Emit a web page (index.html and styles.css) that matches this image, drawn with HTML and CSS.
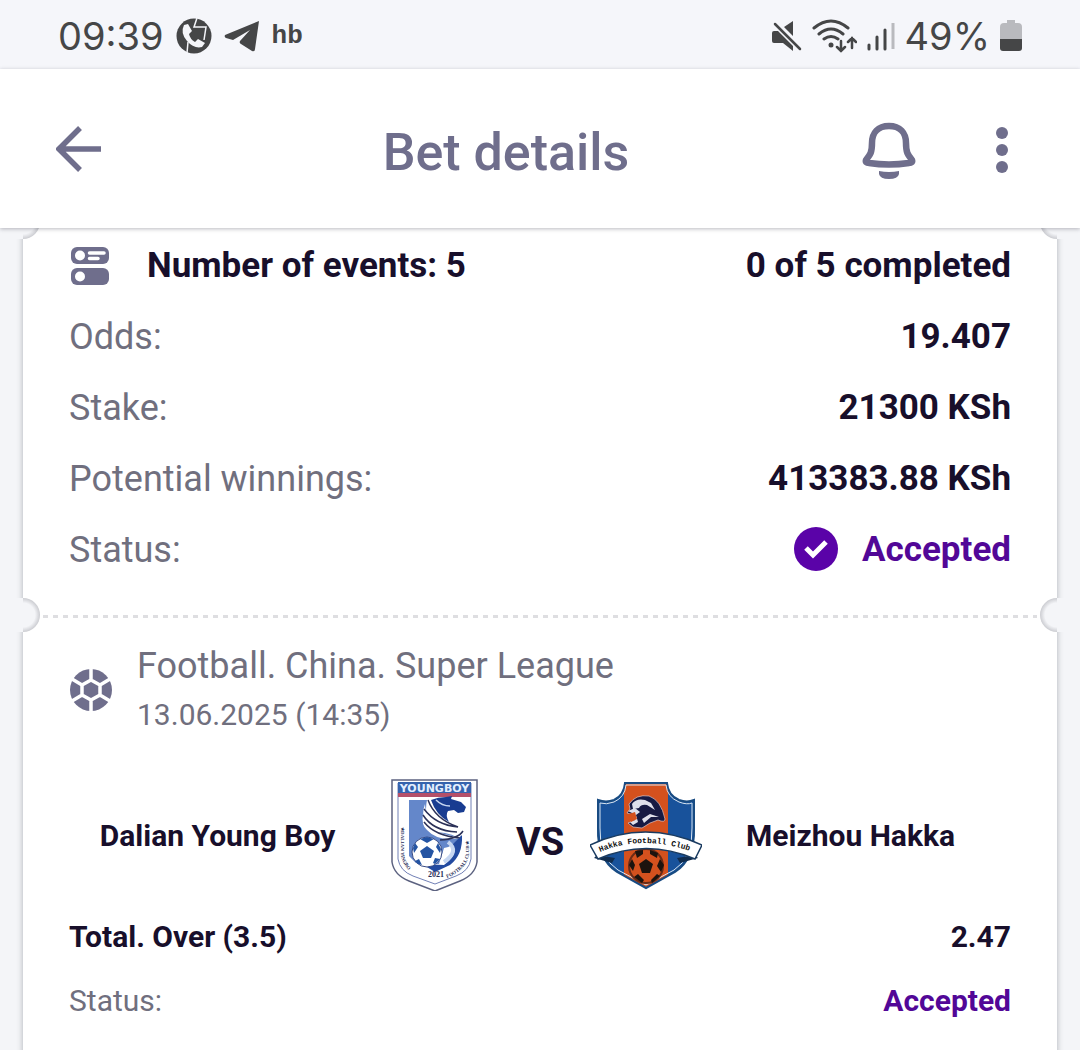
FILE: index.html
```html
<!DOCTYPE html>
<html lang="en">
<head>
<meta charset="utf-8">
<meta name="viewport" content="width=device-width, initial-scale=1">
<title>Bet details</title>
<link rel="stylesheet" href="styles.css">
</head>
<body>
<div class="status-bar">
  <div class="status-group">
    <span class="clock">09:39</span>
    <svg class="call-icon" width="36" height="36" viewBox="0 0 36 36" aria-hidden="true">
      <circle cx="18" cy="18" r="17.5" fill="#454647"/>
      <path d="M8 7Q4 15 11 23Q18 31 26 29L29 25 22 21 19 24Q14 21 13 16L16 13 12 6Z" fill="#f5f6fa"/>
      <path d="M21 0L18 9H30L28 22M12 24L11 35" fill="none" stroke="#f5f6fa" stroke-width="1.500"/>
    </svg>
    <svg class="plane-icon" width="36" height="32" viewBox="0 0 36 32" aria-hidden="true">
      <path d="M35 1L1 15Q0 17 2 18L9 20 26 10 16 21Q15 23 17 24L28 31Q31 32 31 29Z" fill="#454647"/>
    </svg>
    <span class="carrier">hb</span>
  </div>
  <div class="status-group status-group-end">
    <svg class="mute-icon" width="30" height="32" viewBox="0 0 30 32" aria-hidden="true">
      <path d="M2 11H6L21 26V31L11 23H2Q0 23 0 21V13Q0 11 2 11ZM12 7L21 1V16Z" fill="#454647"/>
      <path d="M3 4l25 25" stroke="#454647" stroke-width="2.5" stroke-linecap="round"/>
    </svg>
    <svg class="wifi-icon" width="45" height="34" viewBox="0 0 45 34" aria-hidden="true">
      <g fill="none" stroke="#454647" stroke-width="3" stroke-linecap="round">
        <path d="M2 9q17-14 34 0M7 15q12-10 24 0M12 20q7-5 14 0"/>
        <path d="M29 22v10m-4-4l4 4 4-4M40 29V19m-4 4l4-4 4 4" stroke-width="2.5"/>
      </g>
      <circle cx="19" cy="26" r="2.5" fill="#454647"/>
    </svg>
    <svg class="signal-icon" width="28" height="30" viewBox="0 0 28 30" aria-hidden="true">
      <path d="M2 24v4M10 16v12M18 9v19" stroke="#454647" stroke-width="3" stroke-linecap="round"/>
      <path d="M26 2v26" stroke="#b9babe" stroke-width="3"/>
    </svg>
    <span class="clock">49%</span>
    <svg class="battery-icon" width="22" height="32" viewBox="0 0 22 32" aria-hidden="true">
      <path d="M7 0h8v3h3q4 0 4 4v12H0V7q0-4 4-4h3z" fill="#b9babe"/>
      <path d="M0 19h22v9q0 3-3 3H3q-3 0-3-3z" fill="#454647"/>
    </svg>
  </div>
</div>

<header class="app-bar">
  <button class="icon-button" type="button" aria-label="Back">
    <svg width="46" height="46" viewBox="0 0 46 46"><path d="M45 23H4M24 2L3 23l21 21" fill="none" stroke="#6f6e8c" stroke-width="5.5"/></svg>
  </button>
  <h1 class="title">Bet details</h1>
  <div class="actions">
    <button class="icon-button" type="button" aria-label="Notifications">
      <svg width="54" height="58" viewBox="0 0 54 58">
        <path d="M27 5C16 5 10 12 10 22C10 32 8 34 4 39Q3 42 7 42Q27 45 47 42Q51 42 50 39C46 34 44 32 44 22C44 12 38 5 27 5Z" fill="none" stroke="#6f6e8c" stroke-width="6.5" stroke-linejoin="round"/>
        <path d="M17 50q10 2 20 0v3q-1 5-10 5t-10-5z" fill="#6f6e8c"/>
      </svg>
    </button>
    <button class="icon-button" type="button" aria-label="More options">
      <svg width="12" height="46" viewBox="0 0 12 46" fill="#6f6e8c"><circle cx="6" cy="6" r="6"/><circle cx="6" cy="23" r="6"/><circle cx="6" cy="40" r="6"/></svg>
    </button>
  </div>
</header>

<main class="page">
  <article class="ticket">
    <section class="summary">
      <div class="row row-strong">
        <span class="row-label">
          <svg class="events-icon" width="40" height="38" viewBox="0 0 40 38" aria-hidden="true">
            <rect x="1" width="38" height="17" rx="6" fill="#6f6e8c"/>
            <rect x="1" y="21" width="38" height="17" rx="6" fill="#6f6e8c"/>
            <circle cx="10" cy="8.500" r="5" fill="#fff"/><circle cx="10" cy="29.500" r="5" fill="#fff"/>
            <path d="M19.500 6H34M19.500 11.500H28" stroke="#fff" stroke-width="3.500" stroke-linecap="round"/>
          </svg>
          Number of events: 5
        </span>
        <span class="row-value">0 of 5 completed</span>
      </div>
      <div class="row"><span class="caption">Odds:</span><span class="row-value">19.407</span></div>
      <div class="row"><span class="caption">Stake:</span><span class="row-value">21300 KSh</span></div>
      <div class="row"><span class="caption">Potential winnings:</span><span class="row-value">413383.88 KSh</span></div>
      <div class="row">
        <span class="caption">Status:</span>
        <span class="row-value accepted">
          <svg width="46" height="46" viewBox="0 0 46 46" aria-hidden="true"><circle cx="23" cy="22" r="22" fill="#5a03a8"/><path d="M13 21l7 7 13-13" fill="none" stroke="#fff" stroke-width="5"/></svg>
          Accepted
        </span>
      </div>
    </section>

    <section class="event">
      <div class="event-head">
        <svg width="44" height="44" viewBox="0 0 44 44" aria-hidden="true">
          <circle cx="22" cy="22" r="21" fill="#6f6e8c"/>
          <path d="M22 12l9 5v10l-9 5-9-5V17zM22 12V0M31 17l10-6M31 27l10 6M22 32v12M13 27L3 33M13 17L3 11" fill="none" stroke="#fff" stroke-width="3.500"/>
        </svg>
        <div>
          <h2 class="league">Football. China. Super League</h2>
          <time class="date" datetime="2025-06-13T14:35">13.06.2025 (14:35)</time>
        </div>
      </div>

      <div class="fixture">
        <span class="team">Dalian Young Boy</span>
        <svg class="crest" width="112" height="112" viewBox="0 0 112 112" role="img" aria-label="Dalian Young Boy crest">
          <defs>
            <path id="ring-left" d="M23 48V77Q27 94 47 101"/>
            <path id="ring-right" d="M69 99Q88 91 91 76V44"/>
          </defs>
          <path d="M14 1H99V83Q97 96 82 102L57 112 31 102Q16 96 14 83Z" fill="#fff" stroke="#5c6280" stroke-width="1.500"/>
          <path d="M20 4H93V80Q91 92 78 97L57 105 35 97Q22 92 20 80Z" fill="#fff" stroke="#7180b6" stroke-width="1"/>
          <path d="M20 3H93V14H20Z" fill="#3563ad"/>
          <path d="M20 14H93V18H20Z" fill="#b55069"/>
          <text x="56.500" y="13" class="crest-name">YOUNGBOY</text>
          <path d="M31 21H49Q45 39 58 49L83 57Q77 67 66 69L61 85 38 84 31 77Z" fill="#6487ca"/>
          <path d="M47 25Q47 43 68 49Q81 51 84 62Q76 54 59 53Q40 45 47 25Z" fill="#fff"/>
          <path d="M50 28Q56 41 80 48Q86 51 87 59Q81 53 65 52Q46 47 50 28ZM45 35Q49 50 66 55L82 59Q60 63 49 51Q43 46 45 35Z" fill="#fff"/>
          <path d="M50 21Q57 40 80 48Q58 46 46 30M45 36Q55 52 79 53M46 43Q57 57 82 59M62 61Q80 60 85 52" fill="none" stroke="#2b3158" stroke-width="1.500"/>
          <path d="M53 21Q60 18 68 18L74 17 73 20 83 23 88 28 86 33 80 34 76 31 70 32Q67 36 71 43Q58 36 53 21Z" fill="#183c91"/>
          <path d="M58 21Q64 27 72 27" fill="none" stroke="#c6d6f1" stroke-width="1.500"/>
          <path d="M84 56Q85 76 72 86L57 93 44 85 66 86Q81 75 73 67Z" fill="#234aa0"/>
          <path d="M70 63Q82 72 66 83" fill="none" stroke="#c6d6f1" stroke-width="4"/>
          <circle cx="49" cy="73" r="15" fill="#fff" stroke="#384a83"/>
          <path d="M49 67l7 5-3 7h-8l-3-7z" fill="#2454a3"/>
          <path d="M42 60l7-2 7 2-7 4zM35 69l2-5 3 4-4 6zM37 82l4-2 3 6-4-1zM55 84l2-5 5 1-5 5zM60 64l3 6-1 4-4-6z" fill="#2454a3"/>
          <g class="crest-ring">
            <text><textPath href="#ring-left">★DALIAN YINGBO</textPath></text>
            <text><textPath href="#ring-right">FOOTBALL CLUB★</textPath></text>
            <text x="58" y="98" class="crest-year">2021</text>
          </g>
        </svg>
        <span class="versus">VS</span>
        <svg class="crest" width="112" height="112" viewBox="0 0 112 112" role="img" aria-label="Meizhou Hakka crest">
          <defs>
            <clipPath id="shield"><path d="M35 4H77Q78 16 89 21Q97 24 104 21V49Q105 80 85 93L56 109 27 93Q7 80 8 49V21Q16 24 24 21Q34 16 35 4Z"/></clipPath>
            <path id="banner-line" d="M10 73Q55 54 108 75"/>
          </defs>
          <g clip-path="url(#shield)">
            <path d="M0 0H112V112H0Z" fill="#18529b"/>
            <path d="M34 0H78V112H34Z" fill="#d4511e"/>
          </g>
          <path d="M35 4H77Q78 16 89 21Q97 24 104 21V49Q105 80 85 93L56 109 27 93Q7 80 8 49V21Q16 24 24 21Q34 16 35 4Z" fill="none" stroke="#184b82" stroke-width="2"/>
          <path d="M36 6H76Q77 18 89 23Q97 26 102 24V49Q103 79 84 91L56 106 28 91Q9 79 10 49V24Q16 26 24 23Q35 18 36 6Z" fill="none" stroke="#d9e5ef" stroke-width="1"/>
          <path d="M39 25Q46 15 59 17Q71 21 75 40Q75 44 68 41L60 44 52 49 43 48 38 44 43 42 44 36 37 34 40 30Z" fill="#171a43" stroke="#e0c7c8" stroke-width=".7"/>
          <path d="M42 25Q46 19 55 21L61 24 65 31 57 26Q51 25 49 29L43 30ZM38 32L45 29 50 33 46 36 48 43 43 46 40 43 45 41 44 35ZM52 40L60 35 69 38 61 38 54 44Z" fill="#dfe0eb"/>
          <path d="M39 35l6-2 2 7-6 3z" fill="#d4511e"/>
          <circle cx="56" cy="87" r="17" fill="#d4511e" stroke="#6b2b16" stroke-width="2"/>
          <path d="M56 80l7 5-3 9h-8l-3-9z" fill="#1d130e"/>
          <path d="M45 72l8-1v4l-6 4zM60 71l8 3-1 5-7-4zM39 86l3-6 3 6-2 6zM70 80l4 6-3 7-4-6zM44 98l4-3 6 6-2 3zM61 101l6-6 3 2-8 7z" fill="#1d130e"/>
          <path d="M7 76L25 79 22 84 4 79ZM105 76L87 79 90 84 108 79Z" fill="#102c4e"/>
          <path d="M0 66Q55 40 112 66L105 80Q56 59 8 80Z" fill="#fff" stroke="#1a3b60" stroke-width="1.500"/>
          <text class="banner-text"><textPath href="#banner-line">Hakka Football Club</textPath></text>
        </svg>
        <span class="team">Meizhou Hakka</span>
      </div>

      <div class="row row-small row-strong"><span>Total. Over (3.5)</span><span class="row-value">2.47</span></div>
      <div class="row row-small"><span>Status:</span><span class="row-value accepted">Accepted</span></div>
    </section>
  </article>
</main>
</body>
</html>
```
FILE: styles.css
```css
* { box-sizing: border-box; }

body {
  display: flex;
  flex-direction: column;
  min-height: 100vh;
  margin: 0;
  background: #f4f5f8;
  color: #706f7e;
  font-family: Roboto, "Liberation Sans", sans-serif;
}

svg { display: block; flex: none; }

.status-bar {
  display: flex;
  align-items: center;
  justify-content: space-between;
  height: 69px;
  padding: 2px 58px 0;
  background: #f5f6fa;
  color: #454647;
}

.status-group { display: flex; align-items: center; gap: 12px; }
.status-group-end { gap: 10px; }

.clock { font: 400 38px/48px Inter, sans-serif; }

.carrier { font: 700 26px/32px "Liberation Mono", monospace; }

.app-bar {
  position: relative;
  z-index: 1;
  display: grid;
  grid-template-columns: 160px 1fr 160px;
  align-items: center;
  height: 159px;
  padding: 0 72px 0 56px;
  background: #fff;
  box-shadow: 0 1px 4px rgba(30, 30, 50, 0.3);
}

.icon-button {
  display: flex;
  padding: 0;
  border: 0;
  background: none;
  cursor: pointer;
}

.title {
  margin: 0;
  padding: 8px 52px 0 0;
  font-size: 52px;
  font-weight: 500;
  line-height: 64px;
  color: #6f6e8c;
  text-align: center;
}

.actions {
  display: flex;
  align-items: center;
  justify-content: flex-end;
  gap: 80px;
  padding-top: 2px;
}

.page {
  display: flex;
  flex: 1;
  margin-top: -6px;
  padding: 0 23px;
  overflow: hidden;
}

.ticket {
  display: flex;
  flex: 1;
  flex-direction: column;
  min-width: 0;
  background: #fff;
  box-shadow: 0 0 6px rgba(40, 45, 60, 0.35);
}

.summary, .event { position: relative; padding: 8px 46px 30px; }

.event {
  flex: 1;
  padding-top: 26px;
  background: repeating-linear-gradient(90deg, #dedee1 0 5px, transparent 5px 10px) 20px 0 / calc(100% - 40px) 3px no-repeat;
}

/* Ticket cut-outs on both edges of each section */
.summary::before, .summary::after, .event::before, .event::after {
  content: "";
  position: absolute;
  top: -17px;
  width: 29px;
  height: 34px;
}

.summary::before, .event::before {
  left: -12px;
  border-radius: 0 17px 17px 0;
  background:
    linear-gradient(#f4f5f8, #f4f5f8) left / 12px 100% no-repeat,
    radial-gradient(circle at 12px 17px, #f4f5f8 12px, #cbccd1 17px);
}

.summary::after, .event::after {
  right: -12px;
  border-radius: 17px 0 0 17px;
  background:
    linear-gradient(#f4f5f8, #f4f5f8) right / 12px 100% no-repeat,
    radial-gradient(circle at 17px 17px, #f4f5f8 12px, #cbccd1 17px);
}

.row {
  display: flex;
  align-items: center;
  justify-content: space-between;
  min-height: 71px;
  font-size: 35px;
  line-height: 42px;
}

.row-label { display: flex; align-items: center; gap: 37px; }
.row-label svg { margin-left: 1px; }

.caption { font-size: 36px; }

.row-strong, .row-value { color: #180f2b; font-weight: 700; }

.row-small { min-height: 64px; font-size: 30px; line-height: 36px; }

.accepted {
  display: flex;
  align-items: center;
  gap: 23px;
  color: #520797;
}

.event-head { display: flex; align-items: center; gap: 24px; }

.league { margin: 0; font-size: 36px; font-weight: 400; line-height: 50px; }

.date { display: block; font-size: 30px; line-height: 48px; }

.fixture {
  display: grid;
  grid-template-columns: 1fr 112px 100px 112px 1fr;
  align-items: center;
  margin: 40px 0 14px;
  color: #180f2b;
  font-weight: 700;
  text-align: center;
}

.team { padding: 2px 12px 0 0; font-size: 30px; line-height: 36px; }

.versus { padding-top: 14px; font-size: 38px; line-height: 44px; }

.crest-name {
  fill: #e3efff;
  font: 700 11px "DejaVu Sans", sans-serif;
  text-anchor: middle;
}

.crest-ring { fill: #292e58; font: 700 5px "Liberation Serif", serif; }
.crest-year { font-size: 8px; text-anchor: middle; }
.banner-text { fill: #111; font: 700 8px "Liberation Mono", monospace; }
```
